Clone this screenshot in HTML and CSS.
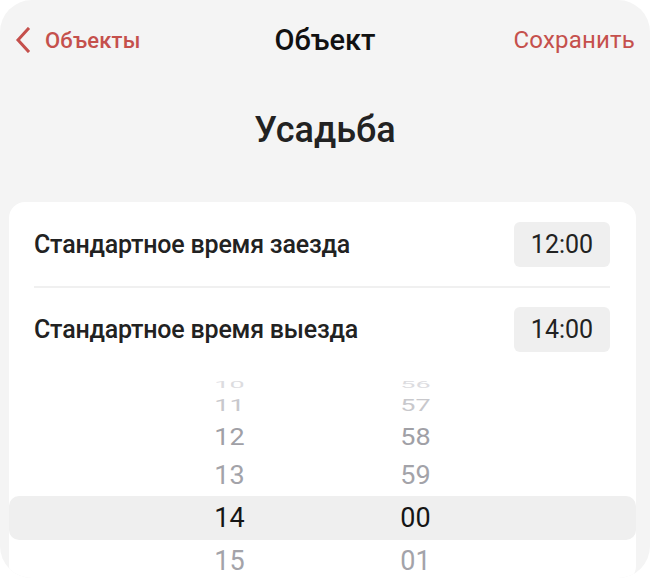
FILE: index.html
```html
<!DOCTYPE html>
<html lang="ru">
<head>
<meta charset="utf-8">
<title>Объект</title>
<link rel="stylesheet" href="styles.css">
</head>
<body>
<div class="screen">
  <header class="topbar">
    <a class="back" href="#">
      <svg class="chev" width="16" height="26" viewBox="0 0 16 26"><path d="M13 2 L3 13 L13 24" fill="none" stroke="currentColor" stroke-width="3" stroke-linecap="square"/></svg>
      <span>Объекты</span>
    </a>
    <div class="title">Объект</div>
    <a class="save" href="#">Сохранить</a>
  </header>
  <h1 class="name">Усадьба</h1>
  <section class="card">
    <div class="row">
      <span class="label">Стандартное время заезда</span>
      <span class="time">12:00</span>
    </div>
    <div class="divider"></div>
    <div class="row">
      <span class="label">Стандартное время выезда</span>
      <span class="time">14:00</span>
    </div>
    <div class="picker">
      <div class="prow p1"><span>10</span><span>56</span></div>
      <div class="prow p2"><span>11</span><span>57</span></div>
      <div class="prow p3"><span>12</span><span>58</span></div>
      <div class="prow p4"><span>13</span><span>59</span></div>
      <div class="prow sel"><span>14</span><span>00</span></div>
      <div class="prow p6"><span>15</span><span>01</span></div>
    </div>
  </section>
</div>
</body>
</html>
```
FILE: styles.css
```css
html, body {
  margin: 0;
  padding: 0;
  background: #ffffff;
}
body {
  font-family: Roboto, "Noto Sans", sans-serif;
  color: #222;
}
.screen {
  width: 650px;
  height: 578px;
  background: #f4f4f4;
  border-radius: 32px;
  overflow: hidden;
  display: flex;
  flex-direction: column;
}
.topbar {
  flex-shrink: 0;
  height: 80px;
  display: grid;
  grid-template-columns: 1fr auto 1fr;
  align-items: center;
  padding: 0 15px 0 15px;
  box-sizing: border-box;
}
.back {
  display: flex;
  align-items: center;
  gap: 14px;
  color: #c5504c;
  text-decoration: none;
  font-size: 22px;
  font-weight: 500;
  justify-self: start;
  letter-spacing: 0.2px;
}
.chev {
  display: block;
}
.title {
  font-size: 29px;
  font-weight: 500;
  color: #111;
}
.save {
  justify-self: end;
  color: #c5504c;
  text-decoration: none;
  font-size: 24px;
  letter-spacing: 0.2px;
}
.name {
  flex-shrink: 0;
  margin: 29px 0 0 0;
  height: 42px;
  line-height: 42px;
  text-align: center;
  font-size: 36px;
  font-weight: 500;
  color: #222;
}
.card {
  flex-shrink: 0;
  margin: 51px 14px 0 9px;
  background: #fff;
  border-radius: 16px;
  padding-top: 20px;
}
.row {
  display: flex;
  justify-content: space-between;
  align-items: center;
  margin: 0 26px 0 25px;
}
.label {
  font-size: 25px;
  font-weight: 500;
  color: #222;
  letter-spacing: -0.2px;
}
.time {
  width: 96px;
  height: 45px;
  background: #efefef;
  border-radius: 6px;
  display: flex;
  align-items: center;
  justify-content: center;
  font-size: 25px;
  color: #222;
}
.divider {
  height: 2px;
  background: #f0f0f0;
  margin: 19px 26px 19px 25px;
}
.picker {
  margin-top: 20px;
}
.prow {
  display: grid;
  grid-template-columns: 120px 120px;
  justify-content: center;
  column-gap: 66px;
  align-items: center;
  font-size: 27px;
  color: #a3a3a9;
  border-radius: 10px;
}
.prow span {
  display: block;
  text-align: center;
  line-height: 1;
}
.p1 { height: 20px; color: #dcdcdf; }
.p1 span { transform: scaleY(0.35); }
.p2 { height: 27px; color: #c8c8cc; }
.p2 span { transform: scaleY(0.62); }
.p3 { height: 36px; color: #a0a0a6; }
.p3 span { transform: scaleY(0.88); }
.p4 { height: 41px; }
.p4 span { transform: scaleY(0.97); }
.sel {
  height: 44px;
  background: #efefef;
  color: #151515;
}
.p6 { height: 42px; }
```
